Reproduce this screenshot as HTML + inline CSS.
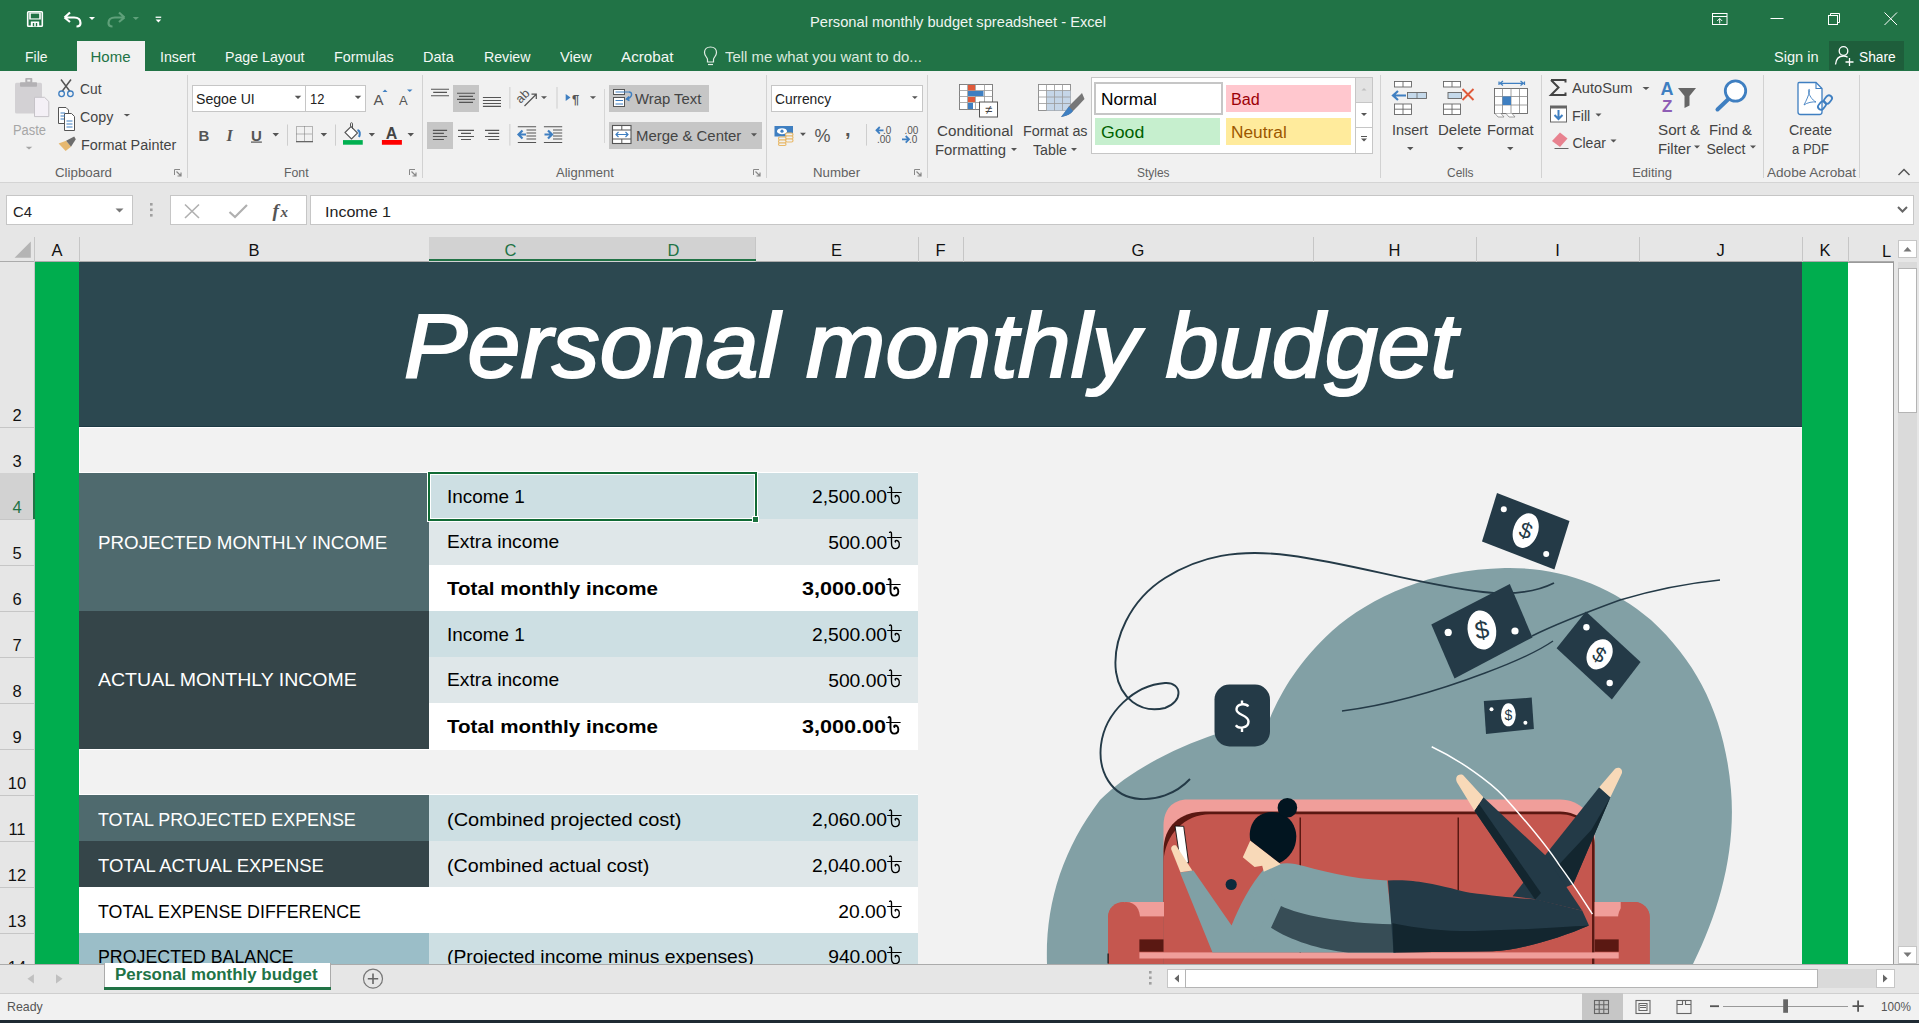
<!DOCTYPE html>
<html><head><meta charset="utf-8">
<style>
*{margin:0;padding:0;box-sizing:border-box}
html,body{width:1919px;height:1023px;overflow:hidden;background:#f1f1f1;font-family:"Liberation Sans",sans-serif;position:relative}
.a{position:absolute}
.t{position:absolute;white-space:nowrap;line-height:1}
.colhd{position:absolute;top:237px;height:25px;border-right:1px solid #c6c6c6;font-size:16.5px;text-align:center;line-height:27px}
.rowhd{position:absolute;left:0;width:35px;border-bottom:1px solid #c6c6c6;font-size:16.5px}
</style></head><body>
<svg width="0" height="0" style="position:absolute"><defs>
<g id="tk" fill="none" stroke="#000" stroke-linecap="round"><path d="M2.6,1.4 C3.3,0.7 4.5,1 4.5,2.7 V12.5 C4.5,16 6,17.6 8.3,17.6 C10.8,17.6 12.3,15.8 12.3,13.5 C12.3,11 10.9,9.5 9.2,9.5 C8.4,9.5 7.9,10.2 8.4,11"/><path d="M0.6,6.5 H14.2" stroke-width="1.2"/></g>
</defs></svg>
<div class="a" style="left:0;top:0;width:1919px;height:71px;background:#217346"></div>
<svg class="a" style="left:0;top:0" width="200" height="40">
<g fill="none" stroke="#fff" stroke-width="1.6">
<rect x="27.7" y="11.7" width="14.6" height="14.6" rx="0.8"/>
</g>
<rect x="29.2" y="12.5" width="11.6" height="7" fill="#fff"/>
<rect x="30.8" y="13.6" width="8.4" height="4.8" fill="#217346"/>
<rect x="30.8" y="21.5" width="8.4" height="4.8" fill="#fff"/>
<rect x="32.8" y="23" width="4.4" height="3.3" fill="#217346"/>
<rect x="34.2" y="23" width="1.6" height="3.3" fill="#fff"/>
<path d="M64.5,17.5 L70,12.5 M64.5,17.5 L70,22 M65,17.5 H74 C78.5,17.5 80.5,20 80.5,23 C80.5,25.5 78.5,26.5 76.5,26.5" fill="none" stroke="#fff" stroke-width="2.2"/>
<path d="M89,16.9 H95 L92,20Z" fill="#fff"/>
<path d="M124.5,17.5 L119,12.5 M124.5,17.5 L119,22 M124,17.5 H115 C110.5,17.5 108.5,20 108.5,23 C108.5,25.5 110.5,26.5 112.5,26.5" fill="none" stroke="#5fa07a" stroke-width="2.2"/>
<path d="M132.7,16.9 H139 L135.8,20Z" fill="#5fa07a"/>
<rect x="155.6" y="16.6" width="5.6" height="1.3" fill="#fff"/>
<path d="M155.6,19.5 H161.2 L158.4,22.6Z" fill="#fff"/>
</svg>
<svg class="a" style="left:1700px;top:0" width="219" height="40">
<g fill="none" stroke="#fff" stroke-width="1">
<rect x="12.5" y="13.5" width="14.5" height="11"/>
<path d="M12.5,16.5 H27 M19.7,23.5 V18.5 M17.2,21 L19.7,18.5 L22.2,21"/>
<path d="M70.5,18.5 H83.5"/>
<rect x="128.5" y="15.5" width="9" height="9"/>
<path d="M130.5,15.5 V13.5 H139.5 V22.5 H137.5"/>
<path d="M184.5,12.5 L197,25 M197,12.5 L184.5,25"/>
</g></svg>
<div class="a" style="left:1829px;top:41px;width:75px;height:29px;background:#1e5e3b"></div>
<svg class="a" style="left:1833px;top:44px" width="24" height="24">
<g fill="none" stroke="#fff" stroke-width="1.3"><circle cx="10.5" cy="7" r="4.3"/><path d="M2.5,20.5 C3,15 6,12 10.5,12 C12,12 13.5,12.4 14.6,13.2"/><path d="M16.5,14 V22 M12.5,18 H20.5"/></g></svg>
<div class="a" style="left:77px;top:41px;width:68px;height:31px;background:#f1f1f1"></div>
<svg class="a" style="left:700px;top:44px" width="24" height="24">
<g fill="none" stroke="#e3eee6" stroke-width="1.2"><path d="M7.5,18 V15.5 C7.5,13.5 4.5,12 4.5,8.5 C4.5,5.2 7,3 10.5,3 C14,3 16.5,5.2 16.5,8.5 C16.5,12 13.5,13.5 13.5,15.5 V18Z"/><path d="M8,20.5 H13"/></g></svg>
<div class="a" style="left:0;top:71px;width:1919px;height:112px;background:#f1f1f1;border-bottom:1px solid #d4d4d4"></div>
<div class="a" style="left:187.0px;top:75px;width:1px;height:103px;background:#d2d2d2"></div>
<div class="a" style="left:422.0px;top:75px;width:1px;height:103px;background:#d2d2d2"></div>
<div class="a" style="left:766.0px;top:75px;width:1px;height:103px;background:#d2d2d2"></div>
<div class="a" style="left:927.0px;top:75px;width:1px;height:103px;background:#d2d2d2"></div>
<div class="a" style="left:1379.5px;top:75px;width:1px;height:103px;background:#d2d2d2"></div>
<div class="a" style="left:1541.0px;top:75px;width:1px;height:103px;background:#d2d2d2"></div>
<div class="a" style="left:1763.0px;top:75px;width:1px;height:103px;background:#d2d2d2"></div>
<div class="a" style="left:1858.5px;top:75px;width:1px;height:103px;background:#d2d2d2"></div>
<svg class="a" style="left:173.7px;top:169px" width="8" height="8"><path d="M0.5,6 V0.5 H6" fill="none" stroke="#888" stroke-width="1"/><path d="M2.5,2.5 L7,7 M7,3.5 V7 H3.5" fill="none" stroke="#888" stroke-width="1.2"/></svg>
<svg class="a" style="left:408.75px;top:169px" width="8" height="8"><path d="M0.5,6 V0.5 H6" fill="none" stroke="#888" stroke-width="1"/><path d="M2.5,2.5 L7,7 M7,3.5 V7 H3.5" fill="none" stroke="#888" stroke-width="1.2"/></svg>
<svg class="a" style="left:753.2px;top:169px" width="8" height="8"><path d="M0.5,6 V0.5 H6" fill="none" stroke="#888" stroke-width="1"/><path d="M2.5,2.5 L7,7 M7,3.5 V7 H3.5" fill="none" stroke="#888" stroke-width="1.2"/></svg>
<svg class="a" style="left:913.9px;top:169px" width="8" height="8"><path d="M0.5,6 V0.5 H6" fill="none" stroke="#888" stroke-width="1"/><path d="M2.5,2.5 L7,7 M7,3.5 V7 H3.5" fill="none" stroke="#888" stroke-width="1.2"/></svg>
<svg class="a" style="left:1896px;top:166px" width="16" height="12"><path d="M2.5,9 L8,3.5 L13.5,9" fill="none" stroke="#555" stroke-width="1.5"/></svg>
<svg class="a" style="left:0;top:71px" width="190" height="90">
<rect x="15" y="11.8" width="27" height="30.6" rx="1.5" fill="#d3d1d4"/>
<rect x="20" y="11.2" width="17" height="4.5" rx="0.8" fill="#b3b1b4"/>
<rect x="25.3" y="7" width="7" height="5" rx="0.8" fill="#b3b1b4"/>
<rect x="27.3" y="8.6" width="3" height="2" fill="#f1f1f1"/>
<path d="M34.5,26.3 H44.5 L48.8,30.5 V45.6 H34.5Z" fill="#f4f0f6" stroke="#c6c3c8" stroke-width="1"/>
<path d="M25.8,75.8 H32.3 L29,78.6Z" fill="#a6a6a6"/>
<g fill="none" stroke="#555" stroke-width="1.5"><path d="M61,8.5 L70,20.5 M71,8.5 L62,20.5"/></g>
<g fill="none" stroke="#3f7fc1" stroke-width="1.3"><circle cx="61.6" cy="22.8" r="2.8"/><circle cx="70.4" cy="22.8" r="2.8"/></g>
<g fill="#fff" stroke="#555" stroke-width="1"><path d="M58.5,36.5 H66 L68.5,39 V52.5 H58.5Z"/><path d="M64.5,42.5 H71.5 L74.5,45.5 V59.5 H64.5Z"/></g>
<g stroke="#3f7fc1" stroke-width="1"><path d="M60.5,42 H65 M60.5,45 H65 M60.5,48 H64"/><path d="M66.5,50 H72.5 M66.5,53 H72.5 M66.5,56 H72.5"/></g>
<path d="M123.7,42.9 H130.1 L126.9,45.6Z" fill="#555"/>
<path d="M58.6,72.5 L66.1,69.8 L71,75.7 L65.6,80Z" fill="#e6b870"/>
<path d="M66.1,69.8 L74.2,65.5 L75.8,68.2 L71,75.7Z" fill="#6d6d6d"/>
</svg>
<div class="a" style="left:192px;top:85px;width:114px;height:27px;background:#fff;border:1px solid #c6c6c6"></div>
<div class="a" style="left:305px;top:85px;width:61px;height:27px;background:#fff;border:1px solid #c6c6c6"></div>
<svg class="a" style="left:185px;top:71px" width="240" height="90">
<path d="M109.75,24.75 H116.25 L113,27.9Z M169.75,24.75 H176.25 L173,27.9Z" fill="#555"/>
<text x="188.5" y="33.5" font-family="Liberation Sans" font-size="15" fill="#555">A</text>
<path d="M197.5,21 L200,18.5 L202.5,21Z" fill="#3f7fc1"/>
<text x="214" y="33.5" font-family="Liberation Sans" font-size="13" fill="#555">A</text>
<path d="M222,18.5 H227.5 L224.75,21Z" fill="#3f7fc1"/>
<text x="13.5" y="69.5" font-family="Liberation Sans" font-size="15" font-weight="bold" fill="#555">B</text>
<text x="41.5" y="69.5" font-family="Liberation Serif" font-size="16" font-weight="bold" font-style="italic" fill="#555">I</text>
<text x="66" y="69.5" font-family="Liberation Sans" font-size="15" font-weight="bold" fill="#555">U</text>
<rect x="66" y="70.5" width="10.9" height="1.2" fill="#555"/>
<path d="M87.5,62 H94 L90.75,65.4Z M135.6,62 H142.1 L138.85,65.4Z M183.75,62 H190 L186.9,65.4Z M222.5,62 H229 L225.75,65.4Z" fill="#555"/>
<rect x="102" y="53.5" width="0.8" height="21.2" fill="#c6c6c6"/>
<rect x="150.1" y="53.5" width="0.8" height="21.2" fill="#c6c6c6"/>
<g fill="none" stroke="#777" stroke-width="1" stroke-dasharray="1 1"><rect x="111.5" y="55.5" width="16" height="15"/><path d="M119.5,55.5 V70.5 M111.5,63 H127.5"/></g>
<rect x="111" y="70" width="17" height="1.3" fill="#666"/>
<path d="M160,61.5 L166,55.5 L172.5,62 L166.5,68Z" fill="#fff" stroke="#555" stroke-width="1.1"/>
<path d="M165.5,55.5 V52.5 C165.5,51.5 167.5,51.5 167.5,52.5 V58" fill="none" stroke="#555" stroke-width="1"/>
<path d="M172.5,59 C175,60 175.5,62.5 174,66" fill="none" stroke="#3f7fc1" stroke-width="2"/>
<rect x="158" y="69.1" width="19.75" height="4.6" fill="#00b050"/>
<text x="206.5" y="67.5" font-family="Liberation Sans" font-size="16" font-weight="bold" fill="#444" text-anchor="middle">A</text>
<rect x="196.9" y="69" width="20" height="4.75" fill="#ff0000"/>
</svg>
<div class="a" style="left:453px;top:85px;width:26px;height:27px;background:#c6c6c6"></div>
<div class="a" style="left:427px;top:122px;width:26px;height:27px;background:#c6c6c6"></div>
<div class="a" style="left:609px;top:85px;width:100px;height:27px;background:#c6c6c6"></div>
<div class="a" style="left:609px;top:122px;width:153px;height:27px;background:#c6c6c6"></div>
<svg class="a" style="left:420px;top:71px" width="350" height="90">
<g stroke="#555" stroke-width="1.1">
<path d="M11,18.2 H29 M13.2,21.4 H27 M11,24.7 H29"/>
<path d="M37,22.3 H55 M39,25.4 H53 M37,28.4 H55 M39,31.4 H53"/>
<path d="M62.9,26.5 H81 M62.9,29.5 H81 M62.9,32.5 H81 M62.9,35.4 H81"/>
<path d="M12.9,59.4 H27.1 M12.9,62.4 H23.9 M12.9,65.5 H27.1 M12.9,68.5 H23.9"/>
<path d="M38,59.4 H54 M41,62.4 H51 M38,65.5 H54 M41,68.5 H51"/>
<path d="M65,59.4 H79.2 M68.2,62.4 H79.2 M65,65.5 H79.2 M68.2,68.5 H79.2"/>
<path d="M97.8,55.8 H116.1 M106.5,59 H116.1 M106.5,62 H116.1 M106.5,65 H116.1 M106.5,68 H116.1 M97.8,71.5 H116.1"/>
<path d="M123.9,55.8 H142.2 M133,59 H142.2 M133,62 H142.2 M133,65 H142.2 M133,68 H142.2 M123.9,71.5 H142.2"/>
</g>
<g fill="none" stroke="#3f7fc1" stroke-width="2.2"><path d="M98.5,63.5 H106 M102.5,59.5 L98.5,63.5 L102.5,67.5"/><path d="M124.5,63.5 H132 M128,59.5 L132,63.5 L128,67.5"/></g>
<rect x="89.5" y="16" width="0.8" height="21.6" fill="#c6c6c6"/><rect x="136.6" y="16" width="0.8" height="21.6" fill="#c6c6c6"/>
<rect x="89.5" y="53" width="0.8" height="21.6" fill="#c6c6c6"/><rect x="184" y="18" width="0.8" height="54" fill="#d0d0d0"/>
<path d="M104.5,35 L116,23.5 M111.5,23.2 H116.3 V28" fill="none" stroke="#555" stroke-width="1.2"/>
<text x="0" y="0" font-family="Liberation Sans" font-size="12.5" fill="#555" transform="translate(100.5,33) rotate(-45)">ab</text>
<path d="M145.7,23 L150.5,26.5 L145.7,30Z" fill="#3f7fc1"/>
<text x="152" y="32.5" font-family="Liberation Sans" font-size="13" font-weight="bold" fill="#555">¶</text>
<path d="M121,25.2 H127 L124,28Z M169.9,25.2 H176 L173,28Z" fill="#555"/>
<path d="M331,62.3 H337 L334,65.5Z" fill="#555"/>
<g fill="#fff" stroke="#555" stroke-width="1"><rect x="193.5" y="18.5" width="11" height="5"/><rect x="193.5" y="26.5" width="11" height="9"/></g>
<g stroke="#3f7fc1" stroke-width="1"><path d="M195.5,21 H209 M195.5,29.5 H203 M195.5,33 H203"/></g>
<path d="M209,21 C212,21 212.5,24.5 210,26.5 L207,28 M209,25.5 L206.5,28 L209.5,29.5" fill="none" stroke="#3f7fc1" stroke-width="1.5"/>
<g fill="#fff" stroke="#555" stroke-width="1.1"><rect x="192.5" y="54.5" width="18.5" height="18"/></g>
<path d="M192.5,59 H211 M192.5,68 H211 M201.8,54.5 V59 M201.8,68 V72.5" stroke="#555" stroke-width="1" fill="none"/>
<path d="M196,63.5 H208 M198.5,61 L196,63.5 L198.5,66 M205.5,61 L208,63.5 L205.5,66" fill="none" stroke="#3f7fc1" stroke-width="1.2"/>
</svg>
<div class="a" style="left:771px;top:85px;width:152px;height:27px;background:#fff;border:1px solid #c6c6c6"></div>
<svg class="a" style="left:765px;top:71px" width="170" height="90">
<path d="M147,25.2 H152.7 L149.85,27.9Z M35,61.8 H40.9 L37.95,65Z" fill="#555"/>
<rect x="9.5" y="55" width="18.5" height="10.5" fill="#3f7fc1"/>
<ellipse cx="17" cy="60.2" rx="5" ry="3" fill="#fff"/>
<circle cx="17" cy="60.2" r="1.6" fill="#3f7fc1"/>
<g fill="#f1f1f1" stroke="#e8b96a" stroke-width="1.2"><rect x="20.5" y="62" width="7.5" height="3" rx="1.5"/><rect x="20.5" y="65" width="7.5" height="3" rx="1.5"/><rect x="20.5" y="68" width="7.5" height="3" rx="1.5"/><rect x="13.5" y="66" width="7.5" height="3" rx="1.5"/><rect x="13.5" y="69" width="7.5" height="3" rx="1.5"/><rect x="13.5" y="72" width="7.5" height="2.5" rx="1.2"/></g>
<text x="49.5" y="71" font-family="Liberation Sans" font-size="18" fill="#555">%</text>
<text x="80" y="64.5" font-family="Liberation Sans" font-size="20" font-weight="bold" fill="#555">,</text>
<rect x="101" y="53" width="0.8" height="21.6" fill="#c6c6c6"/>
<g font-family="Liberation Sans" font-size="10" fill="#555"><text x="118" y="63">.0</text><text x="112" y="72">.00</text><text x="139.5" y="63">.00</text><text x="144" y="72">.0</text></g>
<path d="M111.5,59.3 H118.5 M114.8,56 L111.5,59.3 L114.8,62.6" fill="none" stroke="#3f7fc1" stroke-width="1.8"/>
<path d="M137,68.3 H144 M140.7,65 L144,68.3 L140.7,71.6" fill="none" stroke="#3f7fc1" stroke-width="1.8"/>
</svg>
<svg class="a" style="left:930px;top:71px" width="160" height="60">
<g fill="#fff" stroke="#777" stroke-width="0.9">
<rect x="29.5" y="13.5" width="33" height="25"/>
</g>
<path d="M29.5,19.5 H62.5 M29.5,25.5 H62.5 M29.5,31.5 H62.5 M37.5,13.5 V38.5 M45.5,13.5 V38.5 M54.5,13.5 V38.5" stroke="#999" stroke-width="0.8"/>
<rect x="38" y="14" width="7" height="5.5" fill="#e05a3a"/><rect x="38" y="20" width="15.5" height="5" fill="#3f7fc1"/><rect x="38" y="26" width="7" height="5" fill="#e05a3a"/><rect x="38" y="32" width="5" height="6" fill="#3f7fc1"/>
<rect x="49.5" y="31" width="18" height="15" fill="#fff" stroke="#555" stroke-width="1"/>
<text x="58.5" y="43" font-family="Liberation Sans" font-size="13" fill="#444" text-anchor="middle">≠</text>
<rect x="108.5" y="13.5" width="32" height="26" fill="#fff" stroke="#888" stroke-width="0.9"/>
<rect x="116.5" y="19.5" width="24" height="20" fill="#c5d6e8"/>
<path d="M108.5,19.5 H140.5 M108.5,26 H140.5 M108.5,32.5 H140.5 M116.5,13.5 V39.5 M124.5,13.5 V39.5 M132.5,13.5 V39.5" stroke="#999" stroke-width="0.8"/>
<path d="M152,22 L146,28 L141,33 C138,36 137,39 131,46 C137,45 141,43 143,40 L148,35 L154.5,28Z" fill="#777"/>
<path d="M143,40 C141,43 137,45 131,46 C135,41 137,38 139,35.5Z" fill="#3f7fc1"/>
</svg>
<svg class="a" style="left:1005px;top:145px" width="80" height="10"><path d="M6,3 H12 L9,6Z M66,3 H72 L69,6Z" fill="#555"/></svg>
<div class="a" style="left:1091px;top:77px;width:282px;height:77px;background:#fff;border:1px solid #c6c6c6"></div>
<div class="a" style="left:1094px;top:82px;width:129px;height:33px;background:#fff;border:2px solid #c6c6c6"></div>
<div class="a" style="left:1225.5px;top:85px;width:125px;height:27px;background:#ffc7ce"></div>
<div class="a" style="left:1095px;top:118px;width:124.5px;height:26.5px;background:#c6efce"></div>
<div class="a" style="left:1225.5px;top:118px;width:125px;height:26.5px;background:#ffeb9c"></div>
<div class="a" style="left:1355px;top:77px;width:18px;height:77px;background:#fff;border:1px solid #c6c6c6"></div>
<div class="a" style="left:1355px;top:77px;width:18px;height:26px;background:#e3e3e3;border:1px solid #c6c6c6"></div>
<div class="a" style="left:1355px;top:102.5px;width:18px;height:25px;border:1px solid #c6c6c6;border-top:none"></div>
<svg class="a" style="left:1355px;top:77px" width="18" height="77"><path d="M6.5,13.5 L9,11 L11.5,13.5Z" fill="#c0c0c0"/><path d="M6,36 H12 L9,39Z" fill="#555"/><rect x="6" y="59" width="6" height="1" fill="#555"/><path d="M6,61.5 H12 L9,64.5Z" fill="#555"/></svg>
<svg class="a" style="left:1380px;top:71px" width="160" height="90">
<g fill="#fff" stroke="#666" stroke-width="0.9">
<rect x="14.5" y="10.5" width="17" height="5.5"/><path d="M23,10.5 V16"/>
<rect x="14.5" y="33" width="17" height="10.5"/><path d="M14.5,38.2 H31.5 M23,33 V43.5"/>
</g>
<rect x="27.5" y="21.5" width="19" height="6" fill="#c5d9ea" stroke="#666" stroke-width="0.9"/><path d="M37,21.5 V27.5" stroke="#666" stroke-width="0.8"/>
<path d="M13,24.5 H26 M18,20 L13,24.5 L18,29" fill="none" stroke="#3f7fc1" stroke-width="2.2"/>
<g fill="#fff" stroke="#666" stroke-width="0.9">
<rect x="63.5" y="10.5" width="17" height="5.5"/><path d="M72,10.5 V16"/>
<rect x="63.5" y="33" width="17" height="10.5"/><path d="M63.5,38.2 H80.5 M72,33 V43.5"/>
</g>
<rect x="68" y="21.5" width="13.5" height="6" fill="#c5d9ea" stroke="#666" stroke-width="0.9"/>
<path d="M82.5,18 L93.5,29 M93.5,18 L82.5,29" stroke="#e05a3a" stroke-width="1.9"/>
<path d="M119,10.5 V14 M144.5,10.5 V14 M120,12.3 H143.5 M123,10 L120,12.3 L123,14.6 M140.5,10 L143.5,12.3 L140.5,14.6" fill="none" stroke="#3f7fc1" stroke-width="1.2"/>
<rect x="114.5" y="17.5" width="33" height="25" fill="#fff" stroke="#666" stroke-width="0.9"/>
<path d="M114.5,25.5 H147.5 M114.5,34 H147.5 M122.5,17.5 V42.5 M131,17.5 V42.5 M139.5,17.5 V42.5" stroke="#888" stroke-width="0.8"/>
<rect x="122.5" y="25.5" width="8.5" height="8.5" fill="#3f7fc1"/>
<path d="M115,42.5 L118,46 H124 L121,42.5 M126,42.5 L129,46 H135 L132,42.5" fill="#fff" stroke="#888" stroke-width="0.8"/>
<path d="M27,76 H33.5 L30.25,79.2Z M77,76 H83.5 L80.25,79.2Z M127,76 H133.5 L130.25,79.2Z" fill="#555"/>
</svg>
<svg class="a" style="left:1545px;top:71px" width="220" height="90">
<path d="M6,9 H20.5 V11.5 M6,9 L13.5,16.5 L6,24 H20.5 V21.5" fill="none" stroke="#444" stroke-width="2"/>
<path d="M97.5,16 H104.5 L101,19Z" fill="#555"/>
<rect x="5.5" y="35" width="16" height="16" fill="#fff" stroke="#666" stroke-width="1"/>
<rect x="5.5" y="35" width="16" height="2.5" fill="#666"/>
<path d="M13.5,39 V48 M9.5,44 L13.5,48 L17.5,44" fill="none" stroke="#3f7fc1" stroke-width="2"/>
<path d="M50.5,42.5 H56.5 L53.5,45.5Z M65.5,68.5 H71.5 L68.5,71.5Z" fill="#555"/>
<path d="M7,70 L15,61.5 L22.5,67.5 L15,76Z" fill="#e8828f"/>
<path d="M7,70 L11,73.5 L15,76 L10.5,73Z" fill="#fff"/>
<path d="M9.5,77.5 H23.5" stroke="#555" stroke-width="0.9"/>
<text x="115.5" y="23.5" font-family="Liberation Sans" font-size="18" font-weight="bold" fill="#3f7fc1">A</text>
<text x="117" y="40.5" font-family="Liberation Sans" font-size="17" font-weight="bold" fill="#8e5db5">Z</text>
<path d="M133,17 H151 L144.5,25 V34.5 L139.5,37 V25Z" fill="#666"/>
<circle cx="190.5" cy="20" r="10.2" fill="#fff" stroke="#3f7fc1" stroke-width="2.8"/>
<path d="M183,28.5 L172.5,38.5" stroke="#3f7fc1" stroke-width="4" stroke-linecap="round"/>
<path d="M149,74.5 H155 L152,77.5Z M205,74.5 H211 L208,77.5Z" fill="#555"/>
</svg>
<svg class="a" style="left:1790px;top:71px" width="60" height="60">
<path d="M9,11.5 H26 L32,17.5 V41 C32,42.5 31,43.5 29.5,43.5 H10.5 C9,43.5 8,42.5 8,41 V13 C8,12 8.5,11.5 9,11.5Z" fill="#fff" stroke="#3f7fc1" stroke-width="1.3"/>
<path d="M26,11.5 V17.5 H32" fill="none" stroke="#3f7fc1" stroke-width="1.1"/>
<path d="M14,34 C16,30 19,24 19.5,20 C20,17.5 18,18 18.5,20.5 C19,24 22,29 26,31 C23,30.5 17,31.5 14,34Z" fill="none" stroke="#3f7fc1" stroke-width="0.9"/>
<g fill="none" stroke="#3f7fc1" stroke-width="1.8"><rect x="29" y="30" width="6" height="9" rx="3" transform="rotate(40 32 34.5)"/><rect x="35" y="24" width="6" height="9" rx="3" transform="rotate(40 38 28.5)"/></g>
</svg>
<div class="a" style="left:0;top:183px;width:1919px;height:54px;background:#e6e6e6"></div>
<div class="a" style="left:6px;top:195px;width:127px;height:30px;background:#fff;border:1px solid #c6c6c6"></div>
<div class="a" style="left:170px;top:195px;width:137px;height:30px;background:#fff;border:1px solid #c6c6c6"></div>
<div class="a" style="left:310px;top:195px;width:1604px;height:30px;background:#fff;border:1px solid #c6c6c6"></div>
<svg class="a" style="left:0;top:183px" width="320" height="54">
<path d="M115.5,25.5 H123.5 L119.5,29.5Z" fill="#777"/>
<rect x="150" y="20" width="2.6" height="2.6" fill="#a0a0a0"/><rect x="150" y="25.5" width="2.6" height="2.6" fill="#a0a0a0"/><rect x="150" y="31" width="2.6" height="2.6" fill="#a0a0a0"/>
<path d="M185,21.5 L199,35 M199,21.5 L185,35" stroke="#b0b0b0" stroke-width="1.6"/>
<path d="M229.5,29 L235,34 L247,22" fill="none" stroke="#b0b0b0" stroke-width="2.2"/>
<text x="272.5" y="34" font-family="Liberation Serif" font-size="19" font-style="italic" font-weight="bold" fill="#555">f</text>
<text x="280.5" y="34" font-family="Liberation Serif" font-size="15" font-style="italic" font-weight="bold" fill="#555">x</text>
</svg>
<svg class="a" style="left:1894px;top:203px" width="18" height="12"><path d="M4,4 L8.5,8.5 L13,4" fill="none" stroke="#666" stroke-width="2"/></svg>
<span class="t" style="left:810.3px;top:13.5px;font-size:15px;color:#f0f5f1;transform:scaleX(0.978);transform-origin:0 0;">Personal monthly budget spreadsheet - Excel</span>
<span class="t" style="left:25.0px;top:48.6px;font-size:15px;color:#f4f8f5;transform:scaleX(0.931);transform-origin:0 0;">File</span>
<span class="t" style="left:160.0px;top:48.6px;font-size:15px;color:#f4f8f5;transform:scaleX(0.946);transform-origin:0 0;">Insert</span>
<span class="t" style="left:225.0px;top:48.6px;font-size:15px;color:#f4f8f5;transform:scaleX(0.944);transform-origin:0 0;">Page Layout</span>
<span class="t" style="left:334.0px;top:48.6px;font-size:15px;color:#f4f8f5;transform:scaleX(0.956);transform-origin:0 0;">Formulas</span>
<span class="t" style="left:423.0px;top:48.6px;font-size:15px;color:#f4f8f5;transform:scaleX(0.970);transform-origin:0 0;">Data</span>
<span class="t" style="left:484.2px;top:48.6px;font-size:15px;color:#f4f8f5;transform:scaleX(0.945);transform-origin:0 0;">Review</span>
<span class="t" style="left:560.0px;top:48.6px;font-size:15px;color:#f4f8f5;transform:scaleX(0.984);transform-origin:0 0;">View</span>
<span class="t" style="left:621.2px;top:48.6px;font-size:15px;color:#f4f8f5;transform:scaleX(1.015);transform-origin:0 0;">Acrobat</span>
<span class="t" style="left:90.5px;top:48.6px;font-size:15px;color:#217346;">Home</span>
<span class="t" style="left:724.5px;top:48.6px;font-size:15px;color:#dbe9df;transform:scaleX(0.996);transform-origin:0 0;">Tell me what you want to do...</span>
<span class="t" style="left:1774.0px;top:48.6px;font-size:15px;color:#f4f8f5;transform:scaleX(0.974);transform-origin:0 0;">Sign in</span>
<span class="t" style="left:1859.0px;top:48.6px;font-size:15px;color:#fff;transform:scaleX(0.919);transform-origin:0 0;">Share</span>
<span class="t" style="left:55.4px;top:165.8px;font-size:13px;color:#616161;transform:scaleX(1.024);transform-origin:0 0;">Clipboard</span>
<span class="t" style="left:283.5px;top:165.8px;font-size:13px;color:#616161;transform:scaleX(0.946);transform-origin:0 0;">Font</span>
<span class="t" style="left:556.0px;top:165.8px;font-size:13px;color:#616161;">Alignment</span>
<span class="t" style="left:813.4px;top:165.8px;font-size:13px;color:#616161;transform:scaleX(1.018);transform-origin:0 0;">Number</span>
<span class="t" style="left:1137.0px;top:165.8px;font-size:13px;color:#616161;transform:scaleX(0.918);transform-origin:0 0;">Styles</span>
<span class="t" style="left:1446.9px;top:165.8px;font-size:13px;color:#616161;transform:scaleX(0.920);transform-origin:0 0;">Cells</span>
<span class="t" style="left:1632.2px;top:165.8px;font-size:13px;color:#616161;">Editing</span>
<span class="t" style="left:1767.0px;top:165.8px;font-size:13px;color:#616161;transform:scaleX(1.045);transform-origin:0 0;">Adobe Acrobat</span>
<span class="t" style="left:12.7px;top:123.0px;font-size:14px;color:#a6a6a6;transform:scaleX(0.921);transform-origin:0 0;">Paste</span>
<span class="t" style="left:80.1px;top:82.1px;font-size:14px;color:#444;transform:scaleX(0.986);transform-origin:0 0;">Cut</span>
<span class="t" style="left:80.1px;top:109.6px;font-size:14px;color:#444;transform:scaleX(1.019);transform-origin:0 0;">Copy</span>
<span class="t" style="left:80.6px;top:138.1px;font-size:14px;color:#444;transform:scaleX(1.028);transform-origin:0 0;">Format Painter</span>
<span class="t" style="left:195.6px;top:92.0px;font-size:14px;color:#222;transform:scaleX(1.007);transform-origin:0 0;">Segoe UI</span>
<span class="t" style="left:310.0px;top:92.0px;font-size:14px;color:#222;transform:scaleX(0.924);transform-origin:0 0;">12</span>
<span class="t" style="left:635.3px;top:92.1px;font-size:14px;color:#444;transform:scaleX(1.061);transform-origin:0 0;">Wrap Text</span>
<span class="t" style="left:635.5px;top:128.9px;font-size:14px;color:#444;transform:scaleX(1.066);transform-origin:0 0;">Merge &amp; Center</span>
<span class="t" style="left:774.5px;top:91.8px;font-size:14px;color:#222;transform:scaleX(0.988);transform-origin:0 0;">Currency</span>
<span class="t" style="left:937.0px;top:123.6px;font-size:14px;color:#444;transform:scaleX(1.085);transform-origin:0 0;">Conditional</span>
<span class="t" style="left:934.5px;top:143.1px;font-size:14px;color:#444;transform:scaleX(1.061);transform-origin:0 0;">Formatting</span>
<span class="t" style="left:1022.5px;top:123.6px;font-size:14px;color:#444;transform:scaleX(1.024);transform-origin:0 0;">Format as</span>
<span class="t" style="left:1032.5px;top:143.1px;font-size:14px;color:#444;transform:scaleX(1.016);transform-origin:0 0;">Table</span>
<span class="t" style="left:1100.5px;top:91.5px;font-size:16px;color:#000;transform:scaleX(1.081);transform-origin:0 0;">Normal</span>
<span class="t" style="left:1231.2px;top:91.5px;font-size:16px;color:#9c0006;transform:scaleX(1.010);transform-origin:0 0;">Bad</span>
<span class="t" style="left:1100.5px;top:124.8px;font-size:16px;color:#006100;transform:scaleX(1.105);transform-origin:0 0;">Good</span>
<span class="t" style="left:1231.2px;top:124.8px;font-size:16px;color:#9c5700;transform:scaleX(1.081);transform-origin:0 0;">Neutral</span>
<span class="t" style="left:1391.8px;top:123.3px;font-size:14px;color:#444;transform:scaleX(1.028);transform-origin:0 0;">Insert</span>
<span class="t" style="left:1438.4px;top:123.3px;font-size:14px;color:#444;transform:scaleX(1.070);transform-origin:0 0;">Delete</span>
<span class="t" style="left:1487.3px;top:123.3px;font-size:14px;color:#444;transform:scaleX(1.051);transform-origin:0 0;">Format</span>
<span class="t" style="left:1572.4px;top:81.1px;font-size:14px;color:#444;transform:scaleX(1.049);transform-origin:0 0;">AutoSum</span>
<span class="t" style="left:1572.4px;top:108.6px;font-size:14px;color:#444;transform:scaleX(1.023);transform-origin:0 0;">Fill</span>
<span class="t" style="left:1572.4px;top:135.6px;font-size:14px;color:#444;">Clear</span>
<span class="t" style="left:1657.5px;top:123.3px;font-size:14px;color:#444;transform:scaleX(1.085);transform-origin:0 0;">Sort &amp;</span>
<span class="t" style="left:1657.5px;top:142.4px;font-size:14px;color:#444;transform:scaleX(1.060);transform-origin:0 0;">Filter</span>
<span class="t" style="left:1709.2px;top:123.3px;font-size:14px;color:#444;transform:scaleX(1.063);transform-origin:0 0;">Find &amp;</span>
<span class="t" style="left:1706.4px;top:142.4px;font-size:14px;color:#444;">Select</span>
<span class="t" style="left:1788.7px;top:123.3px;font-size:14px;color:#444;transform:scaleX(1.023);transform-origin:0 0;">Create</span>
<span class="t" style="left:1792.4px;top:142.4px;font-size:14px;color:#444;transform:scaleX(0.932);transform-origin:0 0;">a PDF</span>
<span class="t" style="left:13.0px;top:203.6px;font-size:15px;color:#222;transform:scaleX(0.990);transform-origin:0 0;">C4</span>
<span class="t" style="left:324.5px;top:203.6px;font-size:15px;color:#222;transform:scaleX(1.070);transform-origin:0 0;">Income 1</span><div class="a" style="left:0;top:262px;width:1919px;height:702px;background:#f2f2f2"></div>
<div class="a" style="left:0;top:237px;width:1894px;height:25px;background:#e6e6e6;border-bottom:1px solid #ababab"></div>
<svg class="a" style="left:0;top:237px" width="35" height="25"><path d="M14.6,20.7 L30.8,4.4 L30.8,20.7Z" fill="#b4b4b4"/></svg>
<div class="a" style="left:34px;top:237px;width:1px;height:25px;background:#c6c6c6"></div>
<div class="colhd" style="left:35px;width:45px;color:#111">A</div>
<div class="colhd" style="left:79px;width:351px;color:#111">B</div>
<div class="colhd" style="left:429px;width:164px;background:#d2d2d2;color:#217346">C</div>
<div class="a" style="left:429px;top:259px;width:164px;height:2px;background:#217346"></div>
<div class="colhd" style="left:592px;width:164px;background:#d2d2d2;color:#217346">D</div>
<div class="a" style="left:592px;top:259px;width:164px;height:2px;background:#217346"></div>
<div class="colhd" style="left:755px;width:164px;color:#111">E</div>
<div class="colhd" style="left:918px;width:46px;color:#111">F</div>
<div class="colhd" style="left:963px;width:351px;color:#111">G</div>
<div class="colhd" style="left:1313px;width:164px;color:#111">H</div>
<div class="colhd" style="left:1476px;width:164px;color:#111">I</div>
<div class="colhd" style="left:1639px;width:164px;color:#111">J</div>
<div class="colhd" style="left:1802px;width:47px;color:#111">K</div>
<div class="colhd" style="left:1848px;width:46px;border-right:none"><span class="t" style="left:34px;top:6px;color:#111">L</span></div>
<div class="a" style="left:0;top:262px;width:35px;height:702px;background:#e6e6e6;border-right:1px solid #c6c6c6"></div>
<div class="rowhd" style="top:262px;height:166px;"><span class="t" style="left:0;width:34px;text-align:center;bottom:4px;color:#111">2</span></div>
<div class="rowhd" style="top:427px;height:47px;"><span class="t" style="left:0;width:34px;text-align:center;bottom:4px;color:#111">3</span></div>
<div class="rowhd" style="top:473px;height:47px;background:#d2d2d2;"><span class="t" style="left:0;width:34px;text-align:center;bottom:4px;color:#217346">4</span></div>
<div class="a" style="left:33px;top:473px;width:2px;height:46px;background:#217346"></div>
<div class="rowhd" style="top:519px;height:47px;"><span class="t" style="left:0;width:34px;text-align:center;bottom:4px;color:#111">5</span></div>
<div class="rowhd" style="top:565px;height:47px;"><span class="t" style="left:0;width:34px;text-align:center;bottom:4px;color:#111">6</span></div>
<div class="rowhd" style="top:611px;height:47px;"><span class="t" style="left:0;width:34px;text-align:center;bottom:4px;color:#111">7</span></div>
<div class="rowhd" style="top:657px;height:47px;"><span class="t" style="left:0;width:34px;text-align:center;bottom:4px;color:#111">8</span></div>
<div class="rowhd" style="top:703px;height:47px;"><span class="t" style="left:0;width:34px;text-align:center;bottom:4px;color:#111">9</span></div>
<div class="rowhd" style="top:749px;height:47px;"><span class="t" style="left:0;width:34px;text-align:center;bottom:4px;color:#111">10</span></div>
<div class="rowhd" style="top:795px;height:47px;"><span class="t" style="left:0;width:34px;text-align:center;bottom:4px;color:#111">11</span></div>
<div class="rowhd" style="top:841px;height:47px;"><span class="t" style="left:0;width:34px;text-align:center;bottom:4px;color:#111">12</span></div>
<div class="rowhd" style="top:887px;height:47px;"><span class="t" style="left:0;width:34px;text-align:center;bottom:4px;color:#111">13</span></div>
<div class="rowhd" style="top:933px;height:47px;"><span class="t" style="left:0;width:34px;text-align:center;bottom:4px;color:#111">14</span></div>
<div class="a" style="left:35px;top:262px;width:44px;height:702px;background:#00ad4e"></div>
<div class="a" style="left:1802px;top:262px;width:46px;height:702px;background:#00ad4e"></div>
<div class="a" style="left:1848px;top:262px;width:46px;height:702px;background:#fff;border-top:1px solid #9a9a9a;border-right:1px solid #9a9a9a"></div>
<div class="a" style="left:79px;top:262px;width:1723px;height:165px;background:#2c4850"></div>
<span class="t" style="left:404px;top:299.5px;font-size:91px;font-style:italic;color:#fff;-webkit-text-stroke:2.2px #fff;transform:scaleX(1.046);transform-origin:0 0">Personal monthly budget</span>
<div class="a" style="left:79px;top:473px;width:350px;height:138px;background:#4f6a6e"></div>
<div class="a" style="left:429px;top:473px;width:489px;height:46px;background:#cddfe3"></div>
<div class="a" style="left:429px;top:519px;width:489px;height:46px;background:#dfe7e9"></div>
<div class="a" style="left:429px;top:565px;width:489px;height:46px;background:#ffffff"></div>
<div class="a" style="left:79px;top:611px;width:350px;height:138px;background:#354549"></div>
<div class="a" style="left:429px;top:611px;width:489px;height:46px;background:#cddfe3"></div>
<div class="a" style="left:429px;top:657px;width:489px;height:46px;background:#dfe7e9"></div>
<div class="a" style="left:429px;top:703px;width:489px;height:46px;background:#ffffff"></div>
<div class="a" style="left:79px;top:795px;width:350px;height:46px;background:#4f6a6e"></div>
<div class="a" style="left:429px;top:795px;width:489px;height:46px;background:#cddfe3"></div>
<div class="a" style="left:79px;top:841px;width:350px;height:46px;background:#354549"></div>
<div class="a" style="left:429px;top:841px;width:489px;height:46px;background:#dfe7e9"></div>
<div class="a" style="left:79px;top:887px;width:839px;height:46px;background:#ffffff"></div>
<div class="a" style="left:79px;top:933px;width:350px;height:46px;background:#9bbec8"></div>
<div class="a" style="left:429px;top:933px;width:489px;height:46px;background:#cddfe3"></div>
<div class="a" style="left:79px;top:426px;width:1723px;height:1px;background:#1d3a44"></div>
<div class="a" style="left:79px;top:427px;width:1723px;height:1px;background:#fff"></div>
<div class="a" style="left:79px;top:472px;width:839px;height:1px;background:#fff"></div>
<div class="a" style="left:79px;top:427px;width:1px;height:46px;background:#fff"></div>
<div class="a" style="left:79px;top:749px;width:839px;height:1px;background:#fff"></div>
<div class="a" style="left:79px;top:794px;width:839px;height:1px;background:#fff"></div>
<div class="a" style="left:79px;top:749px;width:1px;height:46px;background:#fff"></div>
<span class="t" style="left:97.5px;top:532.7px;font-size:19px;font-weight:400;color:#fff;transform:scaleX(0.9877);transform-origin:0 0;">PROJECTED MONTHLY INCOME</span>
<span class="t" style="left:97.5px;top:670.4px;font-size:19px;font-weight:400;color:#fff;transform:scaleX(1.0272);transform-origin:0 0;">ACTUAL MONTHLY INCOME</span>
<span class="t" style="left:97.5px;top:810.2px;font-size:19px;font-weight:400;color:#fff;transform:scaleX(0.9402);transform-origin:0 0;">TOTAL PROJECTED EXPENSE</span>
<span class="t" style="left:97.5px;top:855.9px;font-size:19px;font-weight:400;color:#fff;transform:scaleX(0.9726);transform-origin:0 0;">TOTAL ACTUAL EXPENSE</span>
<span class="t" style="left:97.5px;top:901.5px;font-size:19px;font-weight:400;color:#000;transform:scaleX(0.9372);transform-origin:0 0;">TOTAL EXPENSE DIFFERENCE</span>
<span class="t" style="left:97.5px;top:946.6px;font-size:19px;font-weight:400;color:#000;transform:scaleX(0.9362);transform-origin:0 0;">PROJECTED BALANCE</span>
<span class="t" style="left:446.8px;top:487.2px;font-size:19px;font-weight:400;color:#000;transform:scaleX(0.9958);transform-origin:0 0;">Income 1</span>
<span class="t" style="left:446.8px;top:532.4px;font-size:19px;font-weight:400;color:#000;transform:scaleX(1.0110);transform-origin:0 0;">Extra income</span>
<span class="t" style="left:446.8px;top:578.9px;font-size:19px;font-weight:700;color:#000;transform:scaleX(1.0818);transform-origin:0 0;">Total monthly income</span>
<span class="t" style="right:1032px;top:487.2px;font-size:19px;font-weight:400;color:#000;transform:scaleX(1.014);transform-origin:100% 0;">2,500.00</span>
<svg class="a" style="left:886.5px;top:485.8px" width="15" height="19"><use href="#tk" stroke-width="1.35"/></svg>
<span class="t" style="right:1032px;top:532.7px;font-size:19px;font-weight:400;color:#000;transform:scaleX(1.014);transform-origin:100% 0;">500.00</span>
<svg class="a" style="left:886.5px;top:531.3px" width="15" height="19"><use href="#tk" stroke-width="1.35"/></svg>
<span class="t" style="right:1033px;top:578.9px;font-size:19px;font-weight:700;color:#000;transform:scaleX(1.136);transform-origin:100% 0;">3,000.00</span>
<svg class="a" style="left:885.5px;top:577.5px" width="15" height="19"><use href="#tk" stroke-width="1.9"/></svg>
<span class="t" style="left:446.8px;top:625.2px;font-size:19px;font-weight:400;color:#000;transform:scaleX(0.9958);transform-origin:0 0;">Income 1</span>
<span class="t" style="left:446.8px;top:670.4px;font-size:19px;font-weight:400;color:#000;transform:scaleX(1.0110);transform-origin:0 0;">Extra income</span>
<span class="t" style="left:446.8px;top:716.9px;font-size:19px;font-weight:700;color:#000;transform:scaleX(1.0818);transform-origin:0 0;">Total monthly income</span>
<span class="t" style="right:1032px;top:625.2px;font-size:19px;font-weight:400;color:#000;transform:scaleX(1.014);transform-origin:100% 0;">2,500.00</span>
<svg class="a" style="left:886.5px;top:623.8px" width="15" height="19"><use href="#tk" stroke-width="1.35"/></svg>
<span class="t" style="right:1032px;top:670.7px;font-size:19px;font-weight:400;color:#000;transform:scaleX(1.014);transform-origin:100% 0;">500.00</span>
<svg class="a" style="left:886.5px;top:669.3px" width="15" height="19"><use href="#tk" stroke-width="1.35"/></svg>
<span class="t" style="right:1033px;top:716.9px;font-size:19px;font-weight:700;color:#000;transform:scaleX(1.136);transform-origin:100% 0;">3,000.00</span>
<svg class="a" style="left:885.5px;top:715.5px" width="15" height="19"><use href="#tk" stroke-width="1.9"/></svg>
<span class="t" style="left:446.8px;top:810.2px;font-size:19px;font-weight:400;color:#000;transform:scaleX(1.0525);transform-origin:0 0;">(Combined projected cost)</span>
<span class="t" style="left:446.8px;top:855.9px;font-size:19px;font-weight:400;color:#000;transform:scaleX(1.0353);transform-origin:0 0;">(Combined actual cost)</span>
<span class="t" style="left:446.8px;top:946.9px;font-size:19px;font-weight:400;color:#000;transform:scaleX(1.0161);transform-origin:0 0;">(Projected income minus expenses)</span>
<span class="t" style="right:1032px;top:810.2px;font-size:19px;font-weight:400;color:#000;transform:scaleX(1.014);transform-origin:100% 0;">2,060.00</span>
<svg class="a" style="left:886.5px;top:808.8px" width="15" height="19"><use href="#tk" stroke-width="1.35"/></svg>
<span class="t" style="right:1032px;top:855.9px;font-size:19px;font-weight:400;color:#000;transform:scaleX(1.014);transform-origin:100% 0;">2,040.00</span>
<svg class="a" style="left:886.5px;top:854.5px" width="15" height="19"><use href="#tk" stroke-width="1.35"/></svg>
<span class="t" style="right:1032px;top:901.5px;font-size:19px;font-weight:400;color:#000;transform:scaleX(1.014);transform-origin:100% 0;">20.00</span>
<svg class="a" style="left:886.5px;top:900.1px" width="15" height="19"><use href="#tk" stroke-width="1.35"/></svg>
<span class="t" style="right:1032px;top:946.9px;font-size:19px;font-weight:400;color:#000;transform:scaleX(1.014);transform-origin:100% 0;">940.00</span>
<svg class="a" style="left:886.5px;top:945.5px" width="15" height="19"><use href="#tk" stroke-width="1.35"/></svg>
<div class="a" style="left:428px;top:472px;width:329px;height:49px;border:2px solid #116b35;box-shadow:inset 0 0 0 1px #fff,0 0 0 1px #fff"></div>
<div class="a" style="left:752px;top:516px;width:7px;height:7px;background:#1b7340;border:1px solid #fff"></div><svg class="a" style="left:963px;top:262px" width="839" height="702" viewBox="963 262 839 702">
<!-- blob -->
<path d="M1047,964 C1045,905 1062,850 1100,800 C1130,770 1175,748 1216,734 L1270,718 C1282,690 1300,660 1332,631 C1372,596 1430,570 1505,568 C1560,567 1610,585 1651,620 C1700,665 1725,720 1731,790 C1736,850 1720,910 1693,964 Z" fill="#82a0a5"/>
<!-- curly line -->
<path d="M1190,779 C1175,795 1155,800 1140,799 C1110,797 1098,770 1101,745 C1105,712 1135,685 1165,683 C1183,682 1183,702 1165,708 C1140,714 1120,698 1116,672 C1112,640 1130,600 1165,578 C1200,556 1238,548.5 1290,555.5 C1350,563 1420,585 1483,592 C1520,596 1540,590 1554,583" fill="none" stroke="#243a47" stroke-width="1.9"/>
<!-- lines right -->
<path d="M1532,636 C1560,622 1590,611 1620,600 C1660,588 1700,582 1720,580" fill="none" stroke="#243a47" stroke-width="1.4"/>
<path d="M1342,711 C1390,705 1440,690 1485,673 C1520,660 1540,650 1553,641" fill="none" stroke="#243a47" stroke-width="1.4"/>
<!-- $ box -->
<rect x="1214.5" y="684.5" width="55.5" height="62" rx="15" fill="#243a47"/>
<path d="M1248.3,706.5 C1246.5,703.5 1237,702.8 1236.5,709.2 C1236,715.5 1248.5,714.5 1248.5,721.5 C1248.5,728.5 1238.5,729 1235.8,725.2 M1242,700.5 V704 M1242,728.5 V732" fill="none" stroke="#fff" stroke-width="2.4"/>
<!-- bills -->
<g fill="#243a47">
<path d="M1497,493 L1569.5,521 L1554.4,569.5 L1482,541.6Z"/>
<path d="M1431.3,624.5 L1509.8,584 L1532.5,637.4 L1454.5,678.4Z"/>
<path d="M1585.9,611.4 L1640.6,662 L1611.9,699.5 L1556.6,648.3Z"/>
<path d="M1483.8,701.1 L1531.7,697.6 L1533.9,729 L1486,734Z"/>
</g>
<g fill="#fff">
<circle cx="1503.8" cy="509.3" r="3"/><circle cx="1546.2" cy="553.9" r="3"/>
<ellipse cx="1525.7" cy="530.6" rx="12.3" ry="17.8" transform="rotate(20 1525.7 530.6)"/>
<circle cx="1448.2" cy="632.4" r="3.6"/><circle cx="1515" cy="631" r="3.6"/>
<ellipse cx="1481.9" cy="630" rx="14.2" ry="19.7" transform="rotate(-10 1481.9 630)"/>
<circle cx="1586.4" cy="627.2" r="3.2"/><circle cx="1609.7" cy="683" r="3.2"/>
<ellipse cx="1599.6" cy="654.3" rx="12" ry="16" transform="rotate(30 1599.6 654.3)"/>
<circle cx="1491.5" cy="709.3" r="2"/><circle cx="1525.4" cy="722.7" r="2"/>
<ellipse cx="1508.4" cy="714.8" rx="7.4" ry="11.5"/>
</g>
<g fill="#243a47" font-family="Liberation Sans" text-anchor="middle">
<text x="1525.7" y="538" font-size="22" transform="rotate(20 1525.7 530.6)">$</text>
<text x="1481.9" y="638.5" font-size="25" transform="rotate(-10 1481.9 630)">$</text>
<text x="1599.6" y="662" font-size="21" transform="rotate(30 1599.6 654.3)">$</text>
<text x="1508.4" y="720" font-size="14">$</text>
</g>
<!-- sofa -->
<g>
<path d="M1163.5,964 V826 C1163.5,810 1172,799.6 1188,799.6 H1560 C1580,799.6 1594.7,815 1594.7,835 V964Z" fill="#f09e9a"/>
<path d="M1163.5,964 V851 C1163.5,826 1180,811.5 1205,811.5 H1560 C1580,812 1594.7,825 1594.7,845 V964Z" fill="#5a1812"/>
<path d="M1163.5,964 V862 C1165,834 1185,814.2 1210,814.2 H1560 C1578,814 1592,826 1592,845 V964Z" fill="#c5574f"/>
<path d="M1108,964 V917 C1108,908 1115,902 1124,902 H1163.5 V964Z" fill="#c5574f"/>
<rect x="1124" y="902" width="40" height="14.4" fill="#f09e9a"/>
<path d="M1108,964 V918 C1108,908 1116,902 1126,902 C1136,902 1140,910 1140,918 V964Z" fill="#c5574f"/>
<path d="M1594.7,964 V902 H1635 C1643,902 1649.7,909 1649.7,917 V964Z" fill="#c5574f"/>
<rect x="1594.7" y="902" width="26" height="14.4" fill="#f09e9a"/>
<path d="M1618,964 V918 C1618,909 1624,902 1634,902 C1643,902 1649.7,909 1649.7,917 V964Z" fill="#c5574f"/>
<rect x="1139.4" y="939.4" width="24.1" height="12.3" fill="#5a1812"/>
<rect x="1594.7" y="939.4" width="24" height="12.3" fill="#5a1812"/>
<rect x="1139.4" y="952.4" width="479.3" height="6.1" fill="#f09e9a"/>
<rect x="1299.5" y="817.5" width="1.5" height="135" fill="#5a1812"/>
<rect x="1457.5" y="817.5" width="1.5" height="73" fill="#5a1812"/>
<rect x="1107.5" y="953.5" width="1.2" height="10" fill="#111"/>
</g>
<!-- person -->
<g>
<!-- torso -->
<path d="M1265,868 C1275,864 1285,862 1295,864 C1320,870 1350,879 1387,880.5 L1395.7,952.4 H1247.3 L1231.6,925.4 C1240,905 1250,885 1265,868Z" fill="#80a0a5"/>
<path d="M1281,906 C1300,915 1340,923 1392.3,924.3 L1395.7,952.4 H1348.5 C1320,950 1290,940 1271,927.7Z" fill="#374d56"/>
<!-- arm -->
<path d="M1180,872.6 L1193.4,870.4 L1231.6,925.4 L1260.8,881.6 L1275,900 L1247.3,952.4 H1212.5Z" fill="#80a0a5"/>
<!-- phone -->
<path d="M1175,826 L1183.7,826.3 L1188.6,862.8 L1180.5,863.2Z" fill="#fff" stroke="#111" stroke-width="0.9"/>
<!-- hand -->
<path d="M1171.3,849.5 C1170.5,846.5 1173.5,844.5 1176.1,845.6 L1192.3,870.6 L1180.4,872.3Z" fill="#f8d9b8"/>
<!-- face -->
<path d="M1250.3,840.5 L1242.8,857.2 L1254.6,866.9 L1262.2,865.8 L1263.8,871.7 L1280.5,864.2 L1279.4,863.1Z" fill="#f8d9b8"/>
<path d="M1250.3,840.5 C1248.5,832 1251,822 1258,816.5 C1264,812 1272,810.8 1280,813 C1290,816.5 1296,826 1296.3,836 C1296.5,848 1290,858 1279.4,863.1Z" fill="#021520"/>
<circle cx="1287.4" cy="807.7" r="9.8" fill="#021520"/>
<circle cx="1231.2" cy="884.5" r="5.6" fill="#0d2a3c"/>
<!-- legs -->
<path d="M1387.9,880.5 C1405,879.5 1415,881 1425,882.7 C1445,886 1460,891 1470,892.8 C1495,896 1515,898 1537,899.6 L1582.3,910.8 L1589,925.4 C1560,938 1520,950 1492.4,951.3 L1393.5,952.4Z" fill="#233a47"/>
<path d="M1392.4,923.2 C1420,929 1450,931.5 1475,931 C1520,930 1560,927 1589,925.4 C1560,938 1520,950 1492.4,951.3 L1393.5,952.4Z" fill="#13262f"/>
<path d="M1599.2,787.2 L1610.4,797.3 L1573.3,883.9 L1537,899.6 L1512.6,896.2Z" fill="#233a47"/>
<path d="M1610.4,797.3 L1573.3,883.9 L1557.6,865.9 L1591.3,829.9Z" fill="#13262f"/>
<path d="M1474.4,810.8 L1483.4,797.3 L1545,855 L1582.3,910.8 L1535.1,899.6Z" fill="#233a47"/>
<path d="M1474.4,810.8 L1479,804 L1541,893 L1535.1,899.6Z" fill="#13262f"/>
<path d="M1458,784 C1454,779 1457,773 1463,775 L1483.4,797.3 L1474.4,810.8Z" fill="#f8d9b8"/>
<path d="M1614,770 C1617,766 1623,768 1622,773 L1610.4,797.3 L1599.2,787.2Z" fill="#f8d9b8"/>
<path d="M1431.7,746.7 C1460,760 1490,782 1503.6,796.2 C1525,820 1545,843 1559.8,865.9 C1572,882 1582,898 1592.4,914.2" fill="none" stroke="#fff" stroke-width="1.5"/>
</g>
</svg>
<div class="a" style="left:1894px;top:237px;width:25px;height:727px;background:#e6e6e6"></div>
<div class="a" style="left:1898px;top:262px;width:19px;height:684px;background:#dadada"></div>
<div class="a" style="left:1898px;top:240px;width:19px;height:18px;background:#fff;border:1px solid #c6c6c6"></div>
<div class="a" style="left:1898px;top:268px;width:19px;height:145px;background:#fff;border:1px solid #b4b4b4"></div>
<div class="a" style="left:1898px;top:946px;width:19px;height:18px;background:#fff;border:1px solid #c6c6c6"></div>
<svg class="a" style="left:1898px;top:240px" width="19" height="18"><path d="M5.5,11.5 L9.5,7 L13.5,11.5Z" fill="#777"/></svg>
<svg class="a" style="left:1898px;top:946px" width="19" height="18"><path d="M5.5,6.5 L9.5,11 L13.5,6.5Z" fill="#777"/></svg>
<div class="a" style="left:0;top:964px;width:1919px;height:30px;background:#e6e6e6;border-top:1px solid #ababab;border-bottom:1px solid #cfcfcf"></div>
<svg class="a" style="left:0;top:964px" width="400" height="30">
<path d="M33.9,10.3 L27.4,14.8 L33.9,19.4Z" fill="#c0c0c0"/>
<path d="M56,10.3 L62.5,14.8 L56,19.4Z" fill="#c0c0c0"/>
<circle cx="373" cy="14.7" r="9.5" fill="none" stroke="#777" stroke-width="1.2"/>
<path d="M373,9.5 V20 M367.8,14.7 H378.2" stroke="#666" stroke-width="1.6"/>
</svg>
<div class="a" style="left:103.5px;top:963px;width:227px;height:26px;background:#fff;border-left:1px solid #ababab;border-right:1px solid #ababab"></div>
<div class="a" style="left:103.5px;top:986.5px;width:227px;height:3px;background:#217346"></div>
<svg class="a" style="left:1140px;top:964px" width="20" height="30"><rect x="9" y="7" width="2.6" height="2.6" fill="#a0a0a0"/><rect x="9" y="12.5" width="2.6" height="2.6" fill="#a0a0a0"/><rect x="9" y="18" width="2.6" height="2.6" fill="#a0a0a0"/></svg>
<div class="a" style="left:1167px;top:969px;width:727px;height:19px;background:#dadada"></div>
<div class="a" style="left:1167px;top:969px;width:19px;height:19px;background:#fff;border:1px solid #c6c6c6"></div>
<div class="a" style="left:1185px;top:969px;width:633px;height:19px;background:#fff;border:1px solid #b4b4b4"></div>
<div class="a" style="left:1876px;top:969px;width:19px;height:19px;background:#fff;border:1px solid #c6c6c6"></div>
<svg class="a" style="left:1167px;top:969px" width="19" height="19"><path d="M12,5.5 L7.5,9.5 L12,13.5Z" fill="#666"/></svg>
<svg class="a" style="left:1876px;top:969px" width="19" height="19"><path d="M7,5.5 L11.5,9.5 L7,13.5Z" fill="#666"/></svg>
<div class="a" style="left:0;top:994px;width:1919px;height:26px;background:#f1f1f1"></div>
<div class="a" style="left:0;top:1020px;width:1919px;height:3px;background:#1f2a33"></div>
<div class="a" style="left:1582px;top:993px;width:41px;height:27px;background:#c6c6c6"></div>
<svg class="a" style="left:1580px;top:994px" width="339" height="26">
<g fill="none" stroke="#666" stroke-width="1.1">
<rect x="14.5" y="6.5" width="14" height="13"/><path d="M14.5,10.8 H28.5 M14.5,15.2 H28.5 M19.2,6.5 V19.5 M23.8,6.5 V19.5"/>
<rect x="56" y="6.5" width="14" height="13"/><path d="M59,9.5 H67 V16.5 H59Z M60,11.5 H66 M60,13.5 H66"/>
<rect x="97" y="6.5" width="14" height="13"/><path d="M97,10.5 H102.5 V6.5 M105.5,6.5 V10.5 H111"/>
</g>
<rect x="130" y="11.3" width="9" height="1.8" fill="#555"/>
<rect x="143" y="12" width="125" height="1" fill="#999"/>
<rect x="203.2" y="5.3" width="4.8" height="13.5" fill="#666"/>
<path d="M272.5,12.2 H283.7 M278.1,6.5 V17.8" stroke="#555" stroke-width="1.8"/>
</svg>
<span class="t" style="left:115.4px;top:967.3px;font-size:16px;font-weight:700;color:#217346;transform:scaleX(1.055);transform-origin:0 0;">Personal monthly budget</span>
<span class="t" style="left:7.3px;top:999.7px;font-size:13px;color:#555;transform:scaleX(0.950);transform-origin:0 0;">Ready</span>
<span class="t" style="left:1881.0px;top:999.7px;font-size:13px;color:#555;transform:scaleX(0.902);transform-origin:0 0;">100%</span></body></html>
